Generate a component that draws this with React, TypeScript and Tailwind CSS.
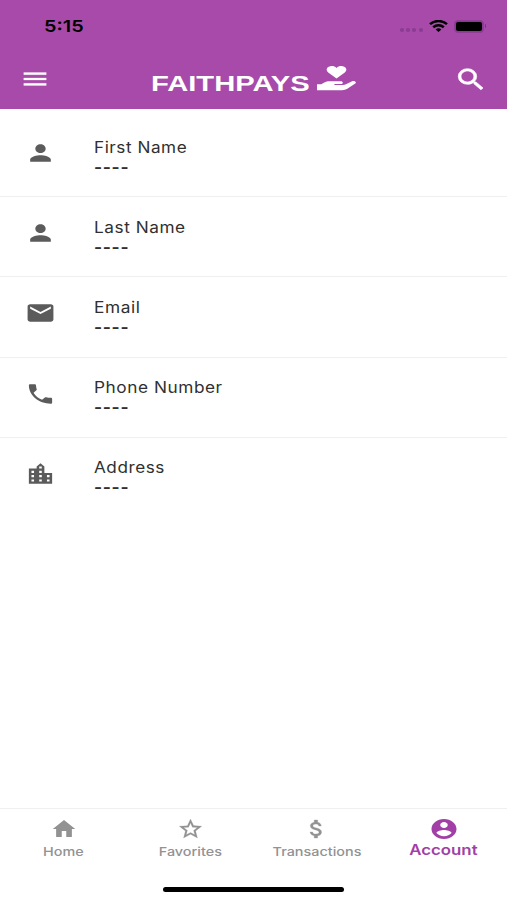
import React from 'react';
import {
  MdMenu,
  MdSearch,
  MdPerson,
  MdEmail,
  MdPhone,
  MdLocationCity,
  MdHome,
  MdStarBorder,
  MdAttachMoney,
} from 'react-icons/md';

const fields = [
  { label: 'First Name', Icon: MdPerson, stretch: 'scale-x-[1.105]' },
  { label: 'Last Name', Icon: MdPerson, stretch: 'scale-x-[1.11]' },
  { label: 'Email', Icon: MdEmail, stretch: 'scale-x-[1.115]' },
  { label: 'Phone Number', Icon: MdPhone, stretch: 'scale-x-[1.112]' },
  { label: 'Address', Icon: MdLocationCity, stretch: 'scale-x-[1.105]' },
];

const tabs = [
  { label: 'Home', Icon: MdHome, weight: '[stroke-width:0]', shift: 'translate-x-[0.5px]' },
  { label: 'Favorites', Icon: MdStarBorder, weight: '[stroke-width:0.2]', shift: 'translate-x-0' },
  { label: 'Transactions', Icon: MdAttachMoney, weight: '[stroke-width:0.3]', shift: 'translate-x-0' },
];

function StatusBar() {
  return (
    <div className="flex h-[52px] items-center pl-[44px] pr-[21px] text-black">
      <span className="origin-left scale-x-[1.2] text-[16.5px] leading-none font-semibold">5:15</span>
      <div className="ml-auto flex items-center">
        <div className="mt-[8px] mr-[6px] flex gap-[2.2px]">
          {[0, 1, 2, 3].map((i) => (
            <span key={i} className="h-[4px] w-[4px] rounded-full bg-[#8a3c90]" />
          ))}
        </div>
        <svg className="mr-[6px] h-[12px] w-[19px]" viewBox="0 0 19 12" preserveAspectRatio="none" fill="none" stroke="black" strokeWidth="2.5">
          <path d="M1 4.2C5.6 0 13.4 0 18 4.2" />
          <path d="M4.2 7.3c3-2.7 7.6-2.7 10.6 0" />
          <path d="M9.5 12 6.6 9.4c1.7-1.5 4.1-1.5 5.8 0z" fill="black" stroke="none" />
        </svg>
        <div className="flex h-[13px] w-[30px] items-center rounded-[4px] border border-[#8f3d95] bg-[#8b3a91] p-px">
          <span className="h-full w-full rounded-[2px] bg-black" />
        </div>
        <span className="ml-px h-[4px] w-[1.5px] rounded-r-full bg-[#7d3384]" />
      </div>
    </div>
  );
}

function GivingHand() {
  return (
    <svg viewBox="0 0 39 25" className="mt-[14px] ml-[8px] h-[25px] w-[39px] shrink-0" preserveAspectRatio="none" fill="currentColor">
      <path d="M19.5 12.6 11.2 6.4C8.9 4.6 9.3 1.7 11.7.7c2.5-1.1 5.8-.8 7.8 1.2 2-2 5.3-2.3 7.8-1.2 2.4 1 2.8 3.9.5 5.7z" />
      <path d="M0 18.2h4.2l3.1-1.7c1.5-.9 3.3-1.3 5.2-1.3h11.2c2.8 0 2.8 2.9 0 2.9h-5.8c-1 0-1 1 0 1h8c1.1 0 2.1-.3 3-.8l5.7-2.9c2.2-1.1 5.6.4 3.7 2.2l-8 5.2c-1.4.9-3.2 1.4-5.1 1.4H0z" />
    </svg>
  );
}

function AccountIcon() {
  return (
    <svg viewBox="0 0 24 24" className="h-[24px] w-[30px]" preserveAspectRatio="none" fill="currentColor">
      <path d="M12 2C6.48 2 2 6.48 2 12s4.48 10 10 10 10-4.48 10-10S17.52 2 12 2zm0 3c1.66 0 3 1.34 3 3s-1.34 3-3 3-3-1.34-3-3 1.34-3 3-3zm0 14.2c-2.5 0-4.71-1.28-6-3.22.03-1.99 4-3.08 6-3.08 1.99 0 5.97 1.09 6 3.08-1.29 1.94-3.5 3.22-6 3.22z" />
    </svg>
  );
}

export default function App() {
  return (
    <div className="flex h-[900px] w-[507px] flex-col overflow-hidden bg-white font-[Inter,sans-serif]">
      <header className="h-[109px] shrink-0 bg-[#a74aaa]">
        <StatusBar />
        <div className="flex h-[57px] items-start pl-[20px] pr-[19px] text-white">
          <MdMenu preserveAspectRatio="none" className="mt-[14px] h-[26px] w-[30px] [stroke-width:0.2] [&_path[fill=none]]:hidden" />
          <div className="ml-[101px] flex w-[205px] items-start">
            <span className="mt-[20px] w-[158px] origin-left scale-x-[1.325] font-[Liberation_Sans,Arial,sans-serif] text-[22px] leading-[24px] font-bold">
              FAITHPAYS
            </span>
            <GivingHand />
          </div>
          <MdSearch preserveAspectRatio="none" className="mt-[13px] ml-auto h-[29px] w-[34px] [stroke-width:0.5] [&_path[fill=none]]:hidden" />
        </div>
      </header>

      <main className="flex flex-1 flex-col pt-[8px]">
        {fields.map(({ label, Icon, stretch }, i) => (
          <div
            key={label}
            className={`flex h-[80.2px] items-start pl-[25px] ${i < 4 ? 'border-b border-[#efefef]' : ''}`}
          >
            <Icon preserveAspectRatio="none" className="mt-[23px] h-[26px] w-[31px] text-[#5b5b5b]" />
            <div className="ml-[38px] flex flex-col items-start pt-[20.7px] text-[#303030]">
              <span className={`origin-left text-[15.5px] leading-[20px] tracking-[0.5px] ${stretch}`}>{label}</span>
              <span className="origin-left scale-x-[1.12] text-[15.5px] leading-[20px] font-bold tracking-[0.6px]">----</span>
            </div>
          </div>
        ))}
      </main>

      <nav className="flex h-[67px] shrink-0 border-t border-[#efefef] text-[#929292]">
        {tabs.map(({ label, Icon, weight, shift }) => (
          <div key={label} className={`flex flex-1 flex-col items-center pt-[8px] ${shift}`}>
            <Icon preserveAspectRatio="none" className={`h-[24px] w-[27px] [&_path[fill=none]]:hidden ${weight}`} />
            <span className="mt-[3px] scale-x-[1.2] text-[12px] leading-[16px] font-medium">{label}</span>
          </div>
        ))}
        <div className="flex flex-1 flex-col items-center pt-[8px] text-[#a13fa6]">
          <AccountIcon />
          <span className="scale-x-[1.2] text-[14px] leading-[18px] font-semibold">Account</span>
        </div>
      </nav>
      <div className="flex h-[25px] shrink-0 justify-center pt-[12px]">
        <div className="h-[5px] w-[181px] rounded-full bg-black" />
      </div>
    </div>
  );
}
